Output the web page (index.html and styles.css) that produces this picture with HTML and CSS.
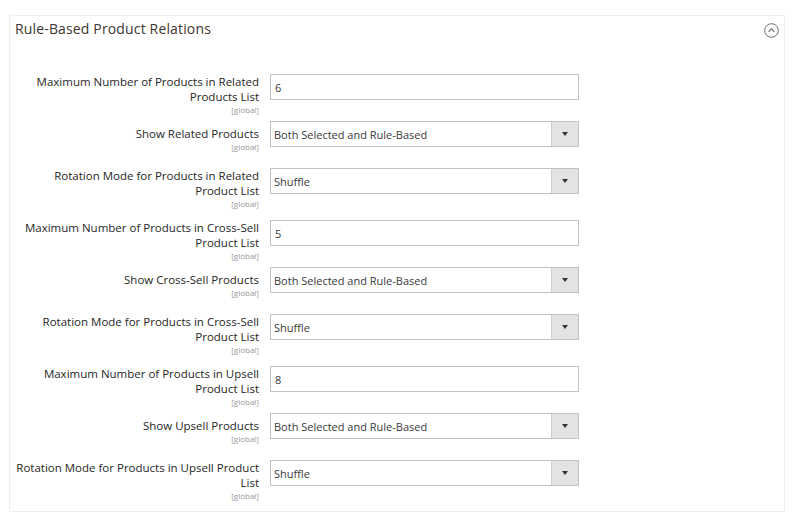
FILE: index.html
```html
<!DOCTYPE html>
<html>
<head>
    <meta charset="utf-8">
    <link rel="stylesheet" href="styles.css">
</head>
<body>

<div class="section">
    <div class="section-head">
        <span class="section-title">Rule-Based Product Relations</span>
        <span class="toggle">
            <svg width="15" height="15" viewBox="0 0 15 15">
                <circle cx="7.5" cy="7.5" r="6.8" fill="none" stroke="#6b6b6b" stroke-width="1"/>
                <path d="M4.6 8.8 L7.5 5.9 L10.4 8.8" fill="none" stroke="#6b6b6b" stroke-width="1.1"/>
            </svg>
        </span>
    </div>

    <div class="fields">
        <div class="row">
            <div class="label">Maximum Number of Products in Related Products List<span class="scope">[global]</span></div>
            <div class="control"><input class="input" type="text" value="6"></div>
        </div>
        <div class="row row-single">
            <div class="label">Show Related Products<span class="scope">[global]</span></div>
            <div class="control">
                <div class="select"><select><option>Both Selected and Rule-Based</option></select><span class="arrow"></span></div>
            </div>
        </div>
        <div class="row row-loose">
            <div class="label">Rotation Mode for Products in Related Product List<span class="scope">[global]</span></div>
            <div class="control">
                <div class="select"><select><option>Shuffle</option></select><span class="arrow"></span></div>
            </div>
        </div>
        <div class="row">
            <div class="label">Maximum Number of Products in Cross-Sell Product List<span class="scope">[global]</span></div>
            <div class="control"><input class="input" type="text" value="5"></div>
        </div>
        <div class="row row-single">
            <div class="label">Show Cross-Sell Products<span class="scope">[global]</span></div>
            <div class="control">
                <div class="select"><select><option>Both Selected and Rule-Based</option></select><span class="arrow"></span></div>
            </div>
        </div>
        <div class="row row-loose">
            <div class="label">Rotation Mode for Products in Cross-Sell Product List<span class="scope">[global]</span></div>
            <div class="control">
                <div class="select"><select><option>Shuffle</option></select><span class="arrow"></span></div>
            </div>
        </div>
        <div class="row">
            <div class="label">Maximum Number of Products in Upsell Product List<span class="scope">[global]</span></div>
            <div class="control"><input class="input" type="text" value="8"></div>
        </div>
        <div class="row row-single">
            <div class="label">Show Upsell Products<span class="scope">[global]</span></div>
            <div class="control">
                <div class="select"><select><option>Both Selected and Rule-Based</option></select><span class="arrow"></span></div>
            </div>
        </div>
        <div class="row">
            <div class="label">Rotation Mode for Products in Upsell Product List<span class="scope">[global]</span></div>
            <div class="control">
                <div class="select"><select><option>Shuffle</option></select><span class="arrow"></span></div>
            </div>
        </div>
    </div>
</div>

</body>
</html>
```

FILE: styles.css
```css
body {
    margin: 0;
    padding: 15px 15px 0 9px;
    background-color: #fff;
    font-family: "Open Sans", "Liberation Sans", sans-serif;
    color: #303030;
}
.section {
    border: 1px solid #eeeeee;
    padding: 0 5px 4px 5px;
}
.section-head {
    display: flex;
    justify-content: space-between;
    align-items: center;
    height: 25px;
}
.section-title {
    font-size: 14px;
    color: #41362f;
    letter-spacing: 0.15px;
}
.toggle {
    display: flex;
    margin-top: 3px;
}
.fields {
    padding-top: 33px;
}
.row {
    display: flex;
    align-items: flex-start;
    min-height: 47px;
}
.row-loose {
    min-height: 52px;
}
.label {
    width: 244px;
    padding-top: 1px;
    text-align: right;
    font-size: 11.5px;
    line-height: 14.5px;
    color: #262626;
}
.row-single .label {
    padding-top: 6px;
}
.scope {
    display: block;
    margin-top: 1px;
    font-size: 8px;
    line-height: 10px;
    color: #999;
}
.row-single .scope {
    margin-top: 0;
}
.control {
    margin-left: 11px;
}
.input, .select select {
    box-sizing: border-box;
    width: 309px;
    height: 26px;
    margin: 0;
    padding: 0 4px;
    border: 1px solid #c2c2c2;
    border-radius: 0;
    background: #fff;
    font-family: "Open Sans", "Liberation Sans", sans-serif;
    font-size: 11px;
    color: #3a3a3a;
    outline: none;
}
.select {
    position: relative;
    width: 309px;
}
.select select {
    -webkit-appearance: none;
    appearance: none;
    padding-left: 3px;
}
.arrow {
    position: absolute;
    top: 1px;
    right: 1px;
    width: 26px;
    height: 24px;
    background: #e3e3e3;
    border-left: 1px solid #cfcfcf;
}
.arrow::after {
    content: "";
    position: absolute;
    left: 10px;
    top: 10px;
    border-left: 3px solid transparent;
    border-right: 3px solid transparent;
    border-top: 4px solid #333;
}
```
